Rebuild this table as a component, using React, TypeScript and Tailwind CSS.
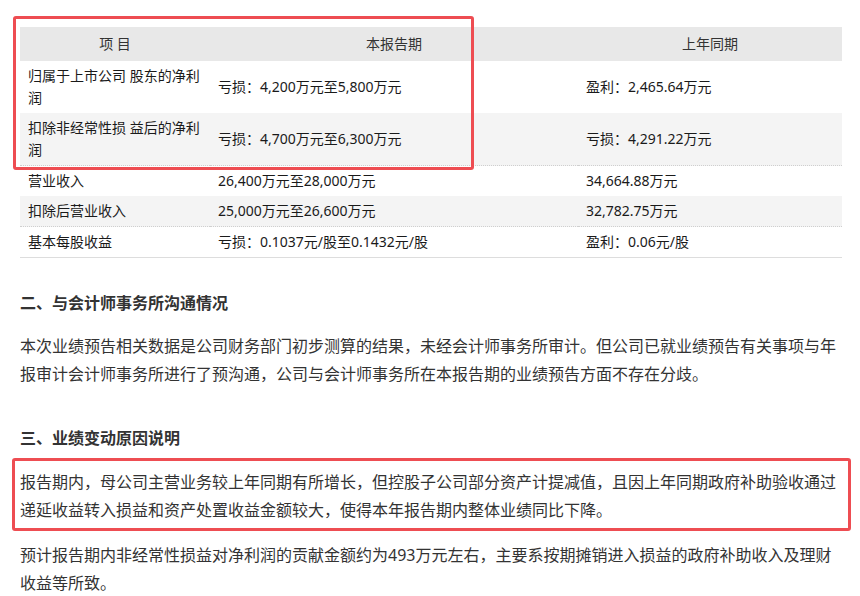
const rows = [
  {
    item: "归属于上市公司 股东的净利润",
    current: "亏损：4,200万元至5,800万元",
    last: "盈利：2,465.64万元",
    shaded: false,
  },
  {
    item: "扣除非经常性损 益后的净利润",
    current: "亏损：4,700万元至6,300万元",
    last: "亏损：4,291.22万元",
    shaded: true,
  },
  {
    item: "营业收入",
    current: "26,400万元至28,000万元",
    last: "34,664.88万元",
    shaded: false,
  },
  {
    item: "扣除后营业收入",
    current: "25,000万元至26,600万元",
    last: "32,782.75万元",
    shaded: true,
  },
  {
    item: "基本每股收益",
    current: "亏损：0.1037元/股至0.1432元/股",
    last: "盈利：0.06元/股",
    shaded: false,
  },
];

const ForecastTable = () => (
  <div className="relative">
    <table className="w-full table-fixed border-collapse text-[14px] leading-[22px] text-[#1a1a1a]">
      <colgroup>
        <col className="w-[190px]" />
        <col className="w-[368px]" />
        <col className="w-[264px]" />
      </colgroup>
      <thead>
        <tr className="bg-[#e8e8e8] text-[#333]">
          <th className="px-2 py-[6px] text-center font-normal">项 目</th>
          <th className="px-2 py-[6px] text-center font-normal">本报告期</th>
          <th className="px-2 py-[6px] text-center font-normal">上年同期</th>
        </tr>
      </thead>
      <tbody>
        {rows.map((row, i) => (
          <tr
            key={row.item}
            className={
              row.shaded
                ? "border-b border-dotted border-[#cfcfcf] bg-[#f4f4f4]"
                : i === rows.length - 1
                  ? "border-b border-[#dddddd]"
                  : ""
            }
          >
            <td className="px-2 py-[4px] align-middle">{row.item}</td>
            <td className="px-2 py-[4px] align-middle">{row.current}</td>
            <td className="px-2 py-[4px] align-middle">{row.last}</td>
          </tr>
        ))}
      </tbody>
    </table>
    {/* highlight box over the first two rows */}
    <div className="pointer-events-none absolute left-[-7px] top-[-11px] h-[154px] w-[461px] rounded-[3px] border-[3px] border-[#ee4d52]" />
  </div>
);

export default function App() {
  return (
    <div className="min-h-[596px] w-[860px] bg-white pl-5 pr-[18px] pt-[27px] font-['Noto_Sans','Noto_Sans_CJK_SC',sans-serif] text-[#333]">
      <ForecastTable />

      <h3 className="mt-[33px] text-[16px] font-bold leading-[24px] text-[#333]">
        二、与会计师事务所沟通情况
      </h3>
      <p className="mt-[17px] text-[16px] leading-[28px]">
        本次业绩预告相关数据是公司财务部门初步测算的结果，未经会计师事务所审计。但公司已就业绩预告有关事项与年报审计会计师事务所进行了预沟通，公司与会计师事务所在本报告期的业绩预告方面不存在分歧。
      </p>

      <h3 className="mt-[38px] text-[16px] font-bold leading-[24px] text-[#333]">
        三、业绩变动原因说明
      </h3>
      <div className="relative mt-[18px]">
        <p className="text-[16px] leading-[28px]">
          报告期内，母公司主营业务较上年同期有所增长，但控股子公司部分资产计提减值，且因上年同期政府补助验收通过递延收益转入损益和资产处置收益金额较大，使得本年报告期内整体业绩同比下降。
        </p>
        <div className="pointer-events-none absolute bottom-[-7px] left-[-8px] right-[-9px] top-[-10px] rounded-[3px] border-[3px] border-[#ee4d52]" />
      </div>
      <p className="mt-[17px] text-[16px] leading-[28px]">
        预计报告期内非经常性损益对净利润的贡献金额约为493万元左右，主要系按期摊销进入损益的政府补助收入及理财收益等所致。
      </p>
    </div>
  );
}
